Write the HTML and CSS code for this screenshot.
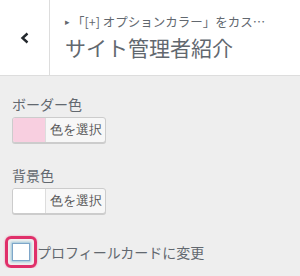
FILE: index.html
```html
<!DOCTYPE html>
<html lang="ja">

<head>
    <meta charset="UTF-8">
    <title>サイト管理者紹介</title>
    <link rel="stylesheet" href="styles.css">
</head>

<body>
    <div class="panel">
        <!-- ヘッダー -->
        <div class="panel-header">
            <button class="back-button" type="button">
                <svg width="12" height="14" viewBox="0 0 12 14">
                    <path d="M8.5 2.5 L3.5 7 L8.5 11.5" fill="none" stroke="#23282d" stroke-width="2.4"/>
                </svg>
            </button>
            <div class="panel-title">
                <span class="breadcrumb"><span class="arrow">▸</span>「[+] オプションカラー」をカス…</span>
                <h3>サイト管理者紹介</h3>
            </div>
        </div>

        <div class="panel-body">
            <div class="control">
                <span class="control-label">ボーダー色</span>
                <button class="color-button" type="button">
                    <span class="swatch swatch-pink"></span>
                    <span class="color-text">色を選択</span>
                </button>
            </div>

            <div class="control">
                <span class="control-label">背景色</span>
                <button class="color-button" type="button">
                    <span class="swatch"></span>
                    <span class="color-text">色を選択</span>
                </button>
            </div>

            <label class="checkbox-row">
                <span class="highlight">
                    <span class="checkbox"></span>
                </span>
                <span class="checkbox-label">プロフィールカードに変更</span>
            </label>
        </div>
    </div>
</body>

</html>
```

FILE: styles.css
```css
body {
    margin: 0;
    background-color: #eeeeee;
    color: #62686f;
    font-family: "Noto Sans CJK JP", "Noto Sans", sans-serif;
}

.panel-header {
    display: flex;
    height: 75px;
    background-color: #ffffff;
    border-bottom: 1px solid #dddddd;
}

.back-button {
    width: 50px;
    height: 75px;
    padding: 0;
    border: none;
    border-right: 1px solid #dddddd;
    background: #ffffff;
    display: flex;
    align-items: center;
    justify-content: center;
}

.panel-title {
    padding: 12px 0 0 15px;
    overflow: hidden;
}

.breadcrumb {
    display: block;
    font-size: 12.5px;
    line-height: 20px;
    color: #62686f;
    white-space: nowrap;
}

.breadcrumb .arrow {
    font-size: 9px;
    margin-right: 2px;
    vertical-align: 2px;
}

.panel-title h3 {
    margin: 0;
    font-size: 21px;
    font-weight: 400;
    line-height: 30px;
    color: #62686f;
}

.panel-body {
    padding: 18px 12px 0 12px;
}

.control {
    margin-bottom: 22px;
}

.control-label {
    display: block;
    font-size: 14px;
    line-height: 20px;
    margin-bottom: 3px;
}

.color-button {
    display: flex;
    height: 26px;
    width: 94px;
    padding: 0;
    border: 1px solid #cccccc;
    border-radius: 3px;
    box-shadow: 0 1px 0 #cccccc;
    background: #f7f7f7;
    overflow: hidden;
    box-sizing: border-box;
}

.swatch {
    width: 32px;
    height: 100%;
    background: #ffffff;
    border-right: 1px solid #dddddd;
}

.swatch-pink {
    background: #f8cfe0;
}

.color-text {
    flex: 1;
    font-size: 12.5px;
    line-height: 24px;
    color: #555555;
    text-align: center;
}

.checkbox-row {
    display: flex;
    align-items: center;
    margin-left: -7px;
}

.highlight {
    display: flex;
    padding: 4px;
    border: 3px solid #e0306a;
    border-radius: 6px;
    box-shadow: 0 0 2px rgba(224, 48, 106, 0.5);
}

.checkbox {
    width: 16px;
    height: 16px;
    background: #ffffff;
    border: 1px solid #7ea6c9;
    box-shadow: 0 0 2px 1px rgba(30, 140, 190, 0.4);
}

.checkbox-label {
    margin-left: 0;
    font-size: 14px;
    line-height: 20px;
}
```
